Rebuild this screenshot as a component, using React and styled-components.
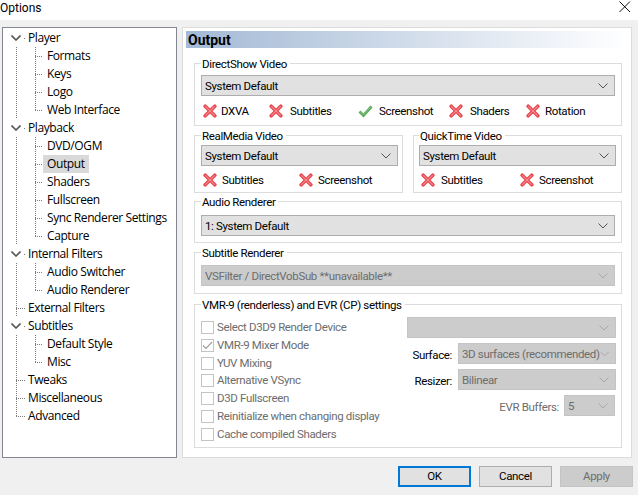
import React from 'react';
import styled, { createGlobalStyle, css } from 'styled-components';

const TREE = [
  { label: 'Player', root: 'chevron' },
  { label: 'Formats', root: 'line', sub: 'tee' },
  { label: 'Keys', root: 'line', sub: 'tee' },
  { label: 'Logo', root: 'line', sub: 'tee' },
  { label: 'Web Interface', root: 'line', sub: 'corner' },
  { label: 'Playback', root: 'chevron' },
  { label: 'DVD/OGM', root: 'line', sub: 'tee' },
  { label: 'Output', root: 'line', sub: 'tee', selected: true },
  { label: 'Shaders', root: 'line', sub: 'tee' },
  { label: 'Fullscreen', root: 'line', sub: 'tee' },
  { label: 'Sync Renderer Settings', root: 'line', sub: 'tee' },
  { label: 'Capture', root: 'line', sub: 'corner' },
  { label: 'Internal Filters', root: 'chevron' },
  { label: 'Audio Switcher', root: 'line', sub: 'tee' },
  { label: 'Audio Renderer', root: 'line', sub: 'corner' },
  { label: 'External Filters', root: 'tee' },
  { label: 'Subtitles', root: 'chevron' },
  { label: 'Default Style', root: 'line', sub: 'tee' },
  { label: 'Misc', root: 'line', sub: 'corner' },
  { label: 'Tweaks', root: 'tee' },
  { label: 'Miscellaneous', root: 'tee' },
  { label: 'Advanced', root: 'corner' },
];

const VMR_OPTIONS = [
  { label: 'Select D3D9 Render Device' },
  { label: 'VMR-9 Mixer Mode', checked: true },
  { label: 'YUV Mixing' },
  { label: 'Alternative VSync', lift: 1 },
  { label: 'D3D Fullscreen' },
  { label: 'Reinitialize when changing display' },
  { label: 'Cache compiled Shaders' },
];

const GlobalStyle = createGlobalStyle`
  html, body {
    margin: 0;
    padding: 0;
    overflow: hidden;
    background: #f0f0f0;
  }
  * {
    box-sizing: border-box;
  }
`;

const Window = styled.div`
  width: 638px;
  height: 495px;
  display: flex;
  flex-direction: column;
  background: #f0f0f0;
  color: #000;
  font-family: Roboto, "Noto Sans", sans-serif;
  font-size: 11.5px;
  letter-spacing: -0.35px;
  overflow: hidden;
`;

const TitleBar = styled.div`
  height: 20px;
  flex: none;
  display: flex;
  justify-content: space-between;
  align-items: flex-start;
  padding: 0 7px 0 0;
  background: #fff;
  font-size: 12px;
  letter-spacing: 0;
  line-height: 16px;
`;

const Main = styled.div`
  height: 439px;
  flex: none;
  display: flex;
  gap: 5px;
  padding: 7px 6px 0 2px;
`;

const Tree = styled.div`
  width: 175px;
  height: 431px;
  flex: none;
  padding: 1px 0 0 4px;
  background: #fff;
  border: 1px solid #828790;
  font-family: "Open Sans", "Noto Sans", sans-serif;
  font-size: 12px;
  letter-spacing: -0.4px;
`;

const TreeRow = styled.div`
  height: 18px;
  display: flex;
  line-height: 18px;
`;

const vertical = 'repeating-linear-gradient(to bottom, #7a7a7a 0 1px, transparent 1px 2px)';
const horizontal = 'repeating-linear-gradient(to right, #7a7a7a 0 1px, transparent 1px 2px)';

const guide = {
  line: (x) => css`
    background: ${vertical} ${x}px 0 / 1px 18px no-repeat;
  `,
  tee: (x) => css`
    background:
      ${vertical} ${x}px 0 / 1px 18px no-repeat,
      ${horizontal} ${x}px 9px / 9px 1px no-repeat;
  `,
  corner: (x) => css`
    background:
      ${vertical} ${x}px 0 / 1px 10px no-repeat,
      ${horizontal} ${x}px 9px / 9px 1px no-repeat;
  `,
  chevron: (x) => css`
    background: ${horizontal} ${x + 8}px 9px / 1px 1px no-repeat;
  `,
};

const Guide = styled.span`
  width: 18px;
  flex: none;
  display: flex;
  align-items: center;
  padding-left: 4px;
  ${({ $kind, $x }) => guide[$kind]($x)}
`;

const TreeLabel = styled.span`
  padding: 0 ${({ $sub }) => ($sub ? 4 : 3)}px;
  white-space: nowrap;
  background: ${({ $selected }) => ($selected ? '#d9d9d9' : 'transparent')};
`;

const Panel = styled.div`
  width: 450px;
  height: 431px;
  flex: none;
  padding: 3px;
  background: #fff;
  border: 1px solid #dcdcdc;
`;

const PanelTitle = styled.div`
  height: 17px;
  padding-left: 2px;
  margin-right: 1px;
  font-size: 14px;
  font-weight: 700;
  letter-spacing: 0;
  line-height: 18px;
  background: linear-gradient(to right, #a3b9d5, #fff);
`;

const Sections = styled.div`
  display: flex;
  flex-direction: column;
  padding: 8px 6px 0 8px;
`;

const Columns = styled.div`
  display: flex;
  justify-content: space-between;
`;

const Group = styled.fieldset`
  width: ${({ $w }) => $w || 428}px;
  height: ${({ $h }) => $h}px;
  margin: ${({ $top }) => $top || 0}px 0 0;
  padding: ${({ $pt }) => $pt ?? 4}px ${({ $right }) => $right ?? 6}px 0 ${({ $left }) => $left ?? 6}px;
  border: 1px solid #dcdcdc;
  min-width: 0;
`;

const GroupTitle = styled.legend`
  padding: 2px 3px 0 1px;
  line-height: 13px;
  white-space: nowrap;
`;

const Combo = styled.div`
  width: ${({ $w }) => ($w ? `${$w}px` : '100%')};
  height: 21px;
  flex: none;
  display: flex;
  justify-content: space-between;
  align-items: center;
  padding: 0 6px 0 3px;
  white-space: nowrap;
  color: ${({ $off }) => ($off ? '#6d6d6d' : '#000')};
  background: ${({ $off }) => ($off ? '#cccccc' : '#e1e1e1')};
  border: 1px solid ${({ $off }) => ($off ? '#c4c4c4' : '#adadad')};
`;

const ComboText = styled.span`
  padding-top: 1px;
  line-height: 18px;
`;

const StatusRow = styled.div`
  display: flex;
  align-items: center;
  height: 16px;
  margin-top: ${({ $top }) => $top}px;
  padding-left: 2px;
`;

const Status = styled.div`
  width: ${({ $w }) => $w}px;
  flex: none;
  display: flex;
  align-items: center;
  white-space: nowrap;
`;

const StatusIcon = styled.span`
  width: ${({ $w }) => $w || 20}px;
  flex: none;
  display: flex;
`;

const VmrBody = styled.div`
  display: flex;
  justify-content: space-between;
  margin-top: 1px;
`;

const Checks = styled.div`
  display: flex;
  flex-direction: column;
  padding-top: 1px;
`;

const CheckRow = styled.div`
  height: 18px;
  display: flex;
  align-items: center;
  gap: 3px;
  margin-top: ${({ $lift }) => ($lift ? -$lift : 0)}px;
  color: #6d6d6d;
  white-space: nowrap;
`;

const CheckBox = styled.span`
  width: 13px;
  height: 13px;
  flex: none;
  display: flex;
  align-items: center;
  justify-content: center;
  background: #fff;
  border: 1px solid #c4c4c4;
`;

const Fields = styled.div`
  width: 209px;
  display: flex;
  flex-direction: column;
  align-items: flex-end;
  gap: 5px;
`;

const FieldRow = styled.div`
  display: flex;
  align-items: center;
  gap: ${({ $gap }) => $gap || 6}px;
  padding-right: ${({ $right }) => $right || 0}px;
  white-space: nowrap;
`;

const FieldLabel = styled.span`
  padding-top: 2px;
  color: ${({ $off }) => ($off ? '#6d6d6d' : '#000')};
`;

const Footer = styled.div`
  flex: 1;
  display: flex;
  justify-content: flex-end;
  gap: 8px;
  padding: 7px 5px 0 0;
`;

const Button = styled.div`
  width: 73px;
  height: 21px;
  display: flex;
  align-items: center;
  justify-content: center;
  line-height: 17px;
  color: ${({ $off }) => ($off ? '#6d6d6d' : '#000')};
  background: ${({ $off }) => ($off ? '#cccccc' : '#e1e1e1')};
  border: ${({ $primary }) => ($primary ? '2px solid #0078d7' : '1px solid #adadad')};
  ${({ $off }) => $off && 'border-color: #c4c4c4;'}
`;

const Chevron = ({ color = '#555', width = 10, stroke = 1 }) => (
  <svg width={width} height="6" viewBox="0 0 10 6" fill="none">
    <path d="M0.5 0.5 L5 5 L9.5 0.5" stroke={color} strokeWidth={stroke} />
  </svg>
);

const CrossIcon = () => (
  <svg width="14" height="14" viewBox="0 0 14 14" fill="none">
    <path d="M2.2 2.2 L11.8 11.8 M11.8 2.2 L2.2 11.8" stroke="#e8474f" strokeWidth="3.6" strokeLinecap="round" />
    <path d="M2.6 2.6 L11.4 11.4 M11.4 2.6 L2.6 11.4" stroke="#f58a8f" strokeWidth="1.2" strokeLinecap="round" />
  </svg>
);

const CheckIcon = () => (
  <svg width="15" height="14" viewBox="0 0 15 14" fill="none">
    <path d="M1.5 7.5 L5.5 11.5 L13.5 2.5" stroke="#5aa85a" strokeWidth="2.8" />
    <path d="M2 7.5 L5.5 11 L13 2.8" stroke="#8ccb8c" strokeWidth="0.8" />
  </svg>
);

const StatusList = ({ items, top }) => (
  <StatusRow $top={top}>
    {items.map((item) => (
      <Status key={item.label} $w={item.w}>
        <StatusIcon $w={item.icon}>{item.ok ? <CheckIcon /> : <CrossIcon />}</StatusIcon>
        {item.label}
      </Status>
    ))}
  </StatusRow>
);

const Select = ({ value, off, w }) => (
  <Combo $off={off} $w={w}>
    <ComboText>{value}</ComboText>
    <Chevron color={off ? '#a8a8a8' : '#555'} />
  </Combo>
);

const App = () => (
  <Window>
    <GlobalStyle />
    <TitleBar>
      <span>Options</span>
      <svg width="12" height="12" viewBox="0 0 12 12" fill="none">
        <path d="M0.5 1.5 L11 12 M11 1.5 L0.5 12" stroke="#111" strokeWidth="1" />
      </svg>
    </TitleBar>

    <Main>
      <Tree>
        {TREE.map((item) => (
          <TreeRow key={item.label}>
            <Guide $kind={item.root} $x={9}>
              {item.root === 'chevron' && <Chevron stroke={1.6} />}
            </Guide>
            {item.sub && <Guide $kind={item.sub} $x={10} />}
            <TreeLabel $sub={!!item.sub} $selected={item.selected}>{item.label}</TreeLabel>
          </TreeRow>
        ))}
      </Tree>

      <Panel>
        <PanelTitle>Output</PanelTitle>
        <Sections>
          <Group $h={70}>
            <GroupTitle>DirectShow Video</GroupTitle>
            <Select value="System Default" />
            <StatusList
              top={7}
              items={[
                { label: 'DXVA', w: 66, icon: 18 },
                { label: 'Subtitles', w: 89, icon: 21 },
                { label: 'Screenshot', w: 91, icon: 21, ok: true },
                { label: 'Shaders', w: 77, icon: 21 },
                { label: 'Rotation', w: 80, icon: 19 },
              ]}
            />
          </Group>

          <Columns>
            <Group $w={209} $h={65} $top={2} $right={4} $pt={2}>
              <GroupTitle>RealMedia Video</GroupTitle>
              <Select value="System Default" />
              <StatusList
                top={6}
                items={[
                  { label: 'Subtitles', w: 96, icon: 19 },
                  { label: 'Screenshot', w: 90, icon: 19 },
                ]}
              />
            </Group>
            <Group $w={209} $h={65} $top={2} $left={5} $right={5} $pt={2}>
              <GroupTitle>QuickTime Video</GroupTitle>
              <Select value="System Default" />
              <StatusList
                top={6}
                items={[
                  { label: 'Subtitles', w: 99, icon: 20 },
                  { label: 'Screenshot', w: 90, icon: 19 },
                ]}
              />
            </Group>
          </Columns>

          <Group $h={49} $top={1} $pt={6}>
            <GroupTitle>Audio Renderer</GroupTitle>
            <Select value="1: System Default" />
          </Group>

          <Group $h={49} $top={2} $pt={5}>
            <GroupTitle>Subtitle Renderer</GroupTitle>
            <Select value="VSFilter / DirectVobSub **unavailable**" off />
          </Group>

          <Group $h={151} $top={3} $right={5}>
            <GroupTitle>VMR-9 (renderless) and EVR (CP) settings</GroupTitle>
            <VmrBody>
              <Checks>
                {VMR_OPTIONS.map((option) => (
                  <CheckRow key={option.label} $lift={option.lift}>
                    <CheckBox>
                      {option.checked && (
                        <svg width="11" height="9" viewBox="0 0 11 9" fill="none">
                          <path d="M1 4.5 L4 7.5 L10 1" stroke="#a0a0a0" strokeWidth="1.2" />
                        </svg>
                      )}
                    </CheckBox>
                    {option.label}
                  </CheckRow>
                ))}
              </Checks>
              <Fields>
                <Select value="" off />
                <FieldRow>
                  <FieldLabel>Surface:</FieldLabel>
                  <Select value="3D surfaces (recommended)" off w={158} />
                </FieldRow>
                <FieldRow>
                  <FieldLabel>Resizer:</FieldLabel>
                  <Select value="Bilinear" off w={158} />
                </FieldRow>
                <FieldRow $right={1} $gap={5}>
                  <FieldLabel $off>EVR Buffers:</FieldLabel>
                  <Select value="5" off w={51} />
                </FieldRow>
              </Fields>
            </VmrBody>
          </Group>
        </Sections>
      </Panel>
    </Main>

    <Footer>
      <Button $primary>OK</Button>
      <Button>Cancel</Button>
      <Button $off>Apply</Button>
    </Footer>
  </Window>
);

export default App;
